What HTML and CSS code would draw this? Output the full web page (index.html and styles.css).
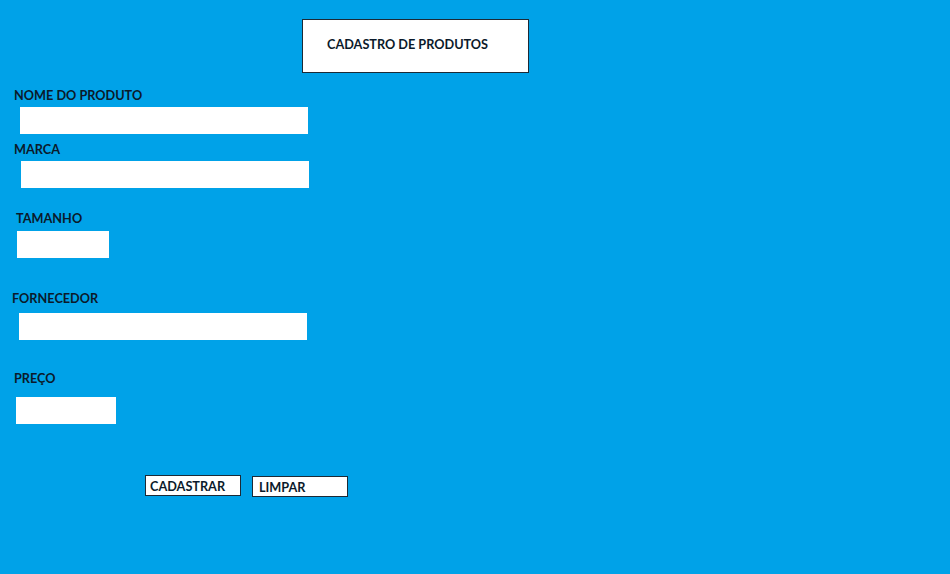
FILE: index.html
```html
<!DOCTYPE html>
<html lang="pt">
<head>
<meta charset="utf-8">
<title>Cadastro de Produtos</title>
<link rel="stylesheet" href="styles.css">
</head>
<body>
<div class="page">
  <div class="title-box">CADASTRO DE PRODUTOS</div>
  <form class="form">
    <div class="field f-nome">
      <label class="label">NOME DO PRODUTO</label>
      <input class="input input-wide" type="text">
    </div>
    <div class="field f-marca">
      <label class="label">MARCA</label>
      <input class="input input-wide" type="text">
    </div>
    <div class="field f-tamanho">
      <label class="label">TAMANHO</label>
      <input class="input input-small" type="text">
    </div>
    <div class="field f-fornecedor">
      <label class="label">FORNECEDOR</label>
      <input class="input input-wide" type="text">
    </div>
    <div class="field f-preco">
      <label class="label">PREÇO</label>
      <input class="input input-price" type="text">
    </div>
    <div class="actions">
      <button type="button" class="btn btn-cadastrar">CADASTRAR</button>
      <button type="button" class="btn btn-limpar">LIMPAR</button>
    </div>
  </form>
</div>
</body>
</html>
```

FILE: styles.css
```css
html, body {
  margin: 0;
  padding: 0;
}
body {
  background: #00a2e8;
  width: 950px;
  height: 574px;
  overflow: hidden;
  font-family: Lato, "Open Sans", sans-serif;
  font-weight: 700;
  font-size: 12.7px;
  color: #0b1a2b;
}
.page {
  display: flex;
  flex-direction: column;
  padding-top: 19px;
}
.title-box {
  margin-left: 302px;
  background: #fff;
  border: 1px solid #1c2a36;
  box-sizing: content-box;
  padding-left: 24px;
  padding-bottom: 4px;
  width: 201px;
  height: 48px;
  display: flex;
  align-items: center;
  line-height: 14px;
}
.form {
  display: flex;
  flex-direction: column;
  align-items: flex-start;
}
.field {
  display: flex;
  flex-direction: column;
  align-items: flex-start;
}
.label {
  display: block;
  line-height: 14px;
}
.input {
  border: none;
  outline: none;
  background: #fff;
  height: 27px;
  padding: 0;
  margin: 0;
  display: block;
}
.input-wide { width: 288px; }
.input-small { width: 92px; }
.input-price { width: 100px; }

.f-nome { margin-top: 15px; }
.f-nome .label { margin-left: 14px; }
.f-nome .input { margin-left: 20px; margin-top: 5px; }

.f-marca { margin-top: 8px; }
.f-marca .label { margin-left: 14px; }
.f-marca .input { margin-left: 21px; margin-top: 5px; }

.f-tamanho { margin-top: 23px; }
.f-tamanho .label { margin-left: 16px; }
.f-tamanho .input { margin-left: 17px; margin-top: 6px; }

.f-fornecedor { margin-top: 33px; }
.f-fornecedor .label { margin-left: 12px; }
.f-fornecedor .input { margin-left: 19px; margin-top: 8px; }

.f-preco { margin-top: 31px; }
.f-preco .label { margin-left: 14px; }
.f-preco .input { margin-left: 16px; margin-top: 12px; }

.actions {
  display: flex;
  align-items: flex-start;
  margin-top: 51px;
  margin-left: 145px;
  gap: 11px;
}
.btn {
  font: inherit;
  color: inherit;
  background: #fff;
  border: 1px solid #1c2a36;
  border-radius: 0;
  width: 96px;
  height: 21px;
  padding: 0 0 0 4px;
  text-align: left;
  line-height: 18px;
  margin: 0;
}
.btn-limpar {
  margin-top: 1px;
  padding-left: 6px;
}
```
